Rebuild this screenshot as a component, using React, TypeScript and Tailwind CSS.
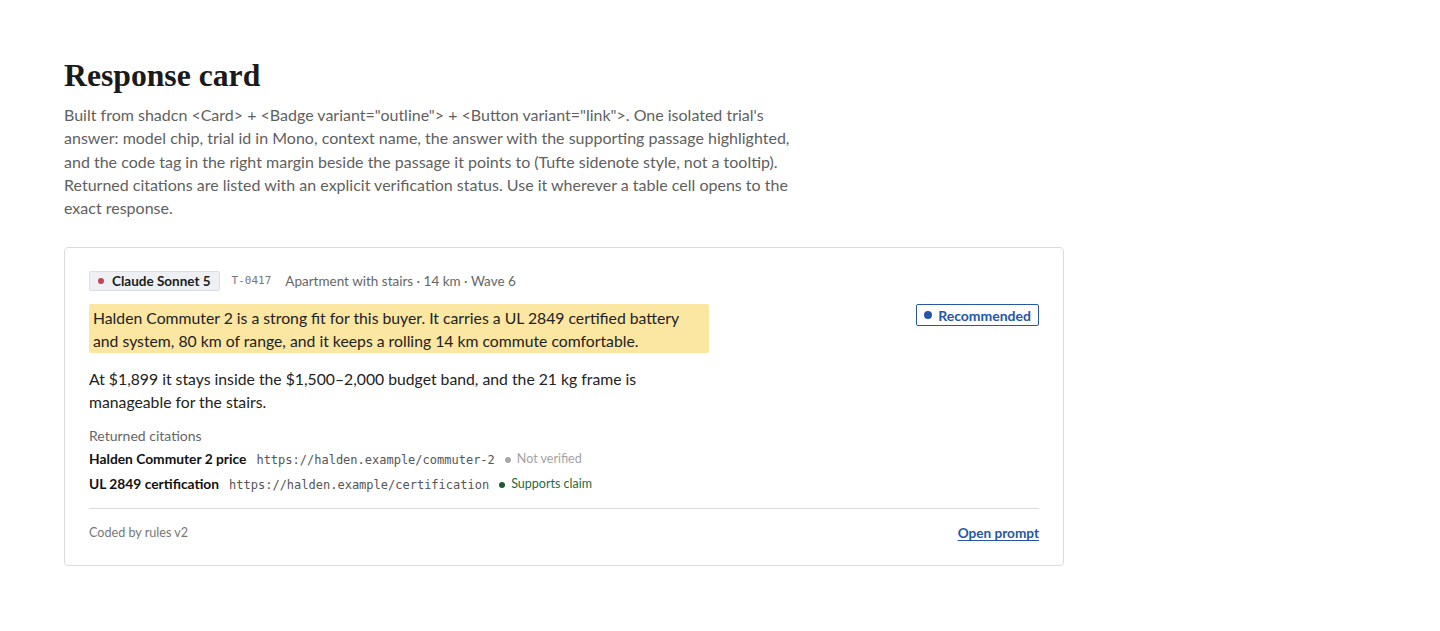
import React from 'react';

type Citation = {
  title: string;
  url: string;
  status: 'unverified' | 'supports';
};

const citations: Citation[] = [
  { title: 'Halden Commuter 2 price', url: 'https://halden.example/commuter-2', status: 'unverified' },
  { title: 'UL 2849 certification', url: 'https://halden.example/certification', status: 'supports' },
];

const StatusLabel: React.FC<{ status: Citation['status'] }> = ({ status }) => {
  if (status === 'supports') {
    return (
      <span className="flex items-center gap-1.5 text-[12.5px] text-[#1f6b3a]">
        <span className="w-1.5 h-1.5 rounded-full bg-[#1f5a34]" />
        Supports claim
      </span>
    );
  }
  return (
    <span className="flex items-center gap-1.5 text-[12.5px] text-[#a3a3a3]">
      <span className="w-1.5 h-1.5 rounded-full bg-[#a8a8a8]" />
      Not verified
    </span>
  );
};

const ResponseCard: React.FC = () => {
  return (
    <div className="w-[1000px] rounded-[4px] border border-[#dcdcdc] bg-white px-6 pt-[23px] pb-[21px]">
      {/* header: model chip, trial id, context */}
      <div className="flex items-center h-5">
        <span className="flex items-center gap-2 rounded-[2px] border border-[#d8dde6] bg-[#eef0f4] px-2 h-[20px] text-[13.5px] font-bold text-[#1c1c1c]">
          <span className="w-1.5 h-1.5 rounded-full bg-[#c2455a]" />
          Claude Sonnet 5
        </span>
        <span className="font-['DejaVu_Sans_Mono',monospace] text-[11px] text-[#777] ml-3">T-0417</span>
        <span className="text-[13.5px] text-[#666] ml-3.5">Apartment with stairs · 14 km · Wave 6</span>
      </div>

      {/* answer with the passage highlighted, code tag in the margin */}
      <div className="mt-[13px] flex justify-between">
        <div className="w-[620px] text-[15.75px] leading-[23px] text-[#222]">
          <p className="rounded-[2px] bg-[#fbe6a2] px-1 py-[1.5px]">
            Halden Commuter 2 is a strong fit for this buyer. It carries a UL 2849 certified battery and system, 80 km of
            range, and it keeps a rolling 14 km commute comfortable.
          </p>
          <p className="mt-[14px]">
            At $1,899 it stays inside the $1,500–2,000 budget band, and the 21 kg frame is manageable for the stairs.
          </p>
        </div>
        <div>
          <span className="flex items-center gap-1.5 rounded-[2px] border border-[#2556a8] px-[7px] h-[22px] text-[14px] font-bold text-[#2556a8]">
            <span className="w-2 h-2 rounded-full bg-[#2556a8]" />
            Recommended
          </span>
        </div>
      </div>

      {/* citations */}
      <div className="mt-[12px]">
        <div className="text-[14px] text-[#666]">Returned citations</div>
        <div className="mt-[4px] flex flex-col gap-[6px]">
          {citations.map((c) => (
            <div key={c.url} className="flex items-center gap-2.5 h-[19px]">
              <span className="text-[13.8px] font-bold text-[#111]">{c.title}</span>
              <span className="font-['DejaVu_Sans_Mono',monospace] text-[12px] text-[#555]">{c.url}</span>
              <StatusLabel status={c.status} />
            </div>
          ))}
        </div>
      </div>

      {/* footer */}
      <div className="mt-[14px] border-t border-[#d9d9d9] pt-[14px] flex items-center justify-between">
        <span className="text-[12.6px] text-[#777]">Coded by rules v2</span>
        <button className="text-[13.6px] font-bold text-[#2556a8] underline underline-offset-2">Open prompt</button>
      </div>
    </div>
  );
};

export default function App() {
  return (
    <div className="min-h-screen bg-white font-['Lato',sans-serif] px-16 pt-[57px]">
      <h1 className="font-['Liberation_Serif',serif] text-[31.7px] font-bold text-[#1a1a1a] leading-[38px]">
        Response card
      </h1>
      <p className="mt-[8px] w-[746px] text-[16px] leading-[23.25px] text-[#5f5f5f]">
        Built from shadcn &lt;Card&gt; + &lt;Badge variant="outline"&gt; + &lt;Button variant="link"&gt;. One isolated
        trial's answer: model chip, trial id in Mono, context name, the answer with the supporting passage highlighted,
        and the code tag in the right margin beside the passage it points to (Tufte sidenote style, not a tooltip).
        Returned citations are listed with an explicit verification status. Use it wherever a table cell opens to the
        exact response.
      </p>
      <div className="mt-[28px]">
        <ResponseCard />
      </div>
    </div>
  );
}
